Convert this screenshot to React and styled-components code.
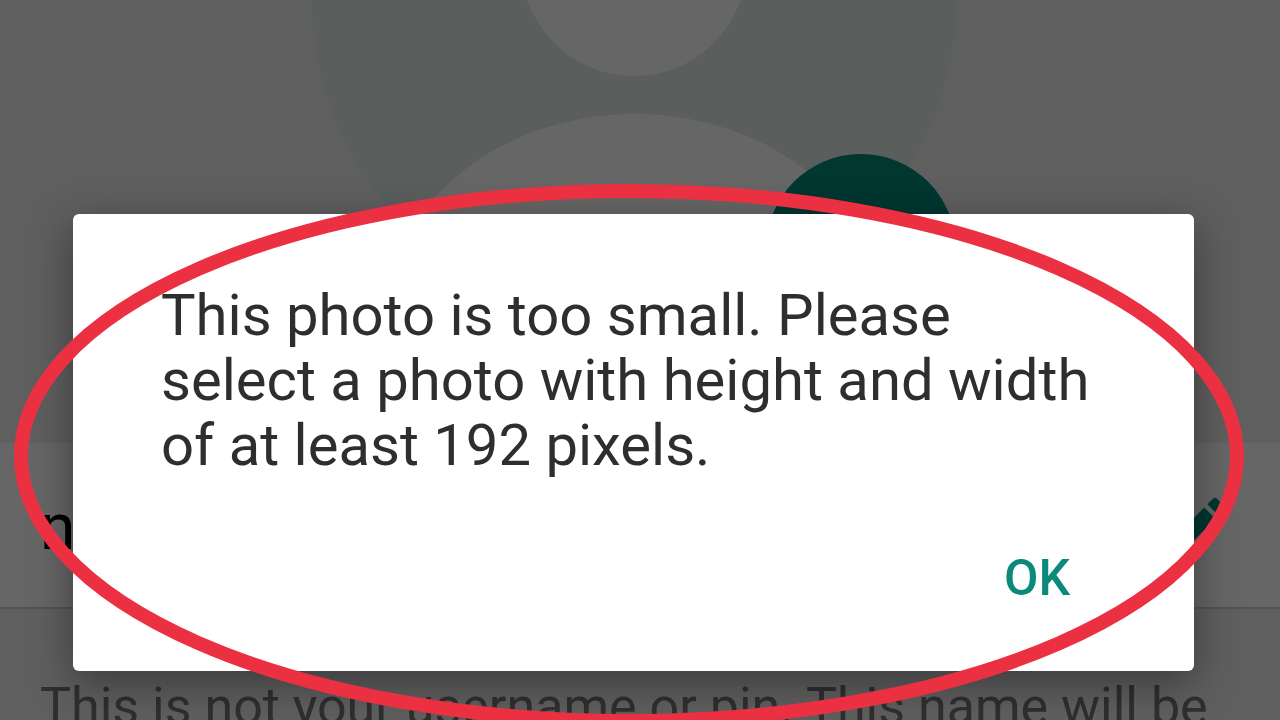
import styled, { createGlobalStyle } from 'styled-components';
import { MdEdit } from 'react-icons/md';

const App = () => {

    return (
        <Screen>
            <GlobalStyle />

            <Profile>
                <PhotoArea>
                    <Avatar>
                        <svg viewBox='0 0 644 322' role='img' aria-label='Profile photo'>
                            <circle cx='322' cy='0' r='322' fill='#e1ebe9' />
                            <circle cx='322' cy='-37' r='113' fill='#ffffff' />
                            <path d='M73 322a250 208 0 0 1 500 0z' fill='#ffffff' />
                        </svg>
                        <CameraButton type='button' aria-label='Change photo' />
                    </Avatar>
                </PhotoArea>

                <NameRow>
                    <NameInput aria-label='Name' defaultValue='n' />
                    <EditButton type='button' aria-label='Edit name'>
                        <MdEdit size={72} />
                    </EditButton>
                </NameRow>

                <Hint>This is not your username or pin. This name will be</Hint>
            </Profile>

            <Scrim>
                <Dialog role='alertdialog' aria-describedby='message'>
                    <Message id='message'>
                        This photo is too small. Please select a photo with height and width of at least 192 pixels.
                    </Message>
                    <Actions>
                        <OkButton type='button'>OK</OkButton>
                    </Actions>
                </Dialog>
            </Scrim>

            <Marker viewBox='0 0 1280 720' preserveAspectRatio='none' aria-hidden='true'>
                <ellipse cx='629' cy='456' rx='608' ry='265' fill='none' stroke='#eb3042' strokeWidth='14' />
            </Marker>
        </Screen>
    );
};

const GlobalStyle = createGlobalStyle`
  * {
    box-sizing: border-box;
  }

  body {
    margin: 0;
    font-family: Roboto, 'Noto Sans', sans-serif;
  }
`;

const Screen = styled.div`
  position: relative;
  height: 100vh;
  overflow: hidden;
  background: #eeeeee;
`;

const Profile = styled.main`
  display: flex;
  flex-direction: column;
`;

const PhotoArea = styled.section`
  display: flex;
  justify-content: center;
  height: 443px;
  padding-right: 12px;
`;

const Avatar = styled.div`
  position: relative;
  width: 644px;

  svg {
    display: block;
    width: 100%;
  }
`;

const CameraButton = styled.button`
  position: absolute;
  top: 154px;
  right: 0;
  width: 190px;
  height: 190px;
  border: none;
  border-radius: 50%;
  background: #00897b;
`;

const NameRow = styled.section`
  display: flex;
  align-items: center;
  height: 166px;
  padding: 0 46px 0 40px;
  background: #ffffff;
  border-bottom: 2px solid #d0d0d0;
`;

const NameInput = styled.input`
  flex: 1;
  min-width: 0;
  padding: 4px 0 0;
  border: none;
  outline: none;
  background: none;
  color: #000000;
  font-family: inherit;
  font-size: 64px;
`;

const EditButton = styled.button`
  display: flex;
  padding: 0;
  border: none;
  background: none;
  color: #00897b;
`;

const Hint = styled.p`
  margin: 0;
  padding: 66px 40px 0;
  color: #757575;
  font-size: 52px;
  line-height: 64px;
  white-space: nowrap;
`;

const Scrim = styled.div`
  position: absolute;
  inset: 0;
  padding: 214px 86px 0 73px;
  background: rgba(0, 0, 0, 0.6);
`;

const Dialog = styled.div`
  display: flex;
  flex-direction: column;
  padding: 69px 88px 57px;
  border-radius: 6px;
  background: #ffffff;
  box-shadow: 0 12px 44px rgba(0, 0, 0, 0.4);
`;

const Message = styled.p`
  margin: 0;
  color: #2e2e2e;
  font-size: 58px;
  line-height: 65px;
`;

const Actions = styled.div`
  display: flex;
  justify-content: flex-end;
  margin-top: 64px;
  padding-right: 36px;
`;

const OkButton = styled.button`
  padding: 8px 0;
  border: none;
  background: none;
  color: #0b8a7b;
  font-family: inherit;
  font-size: 50px;
  font-weight: 500;
  line-height: 56px;
`;

const Marker = styled.svg`
  position: absolute;
  inset: 0;
  width: 100%;
  height: 100%;
  pointer-events: none;
`;

export default App;
